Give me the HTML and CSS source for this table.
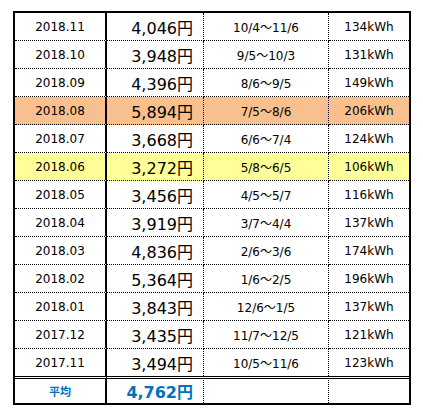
FILE: index.html
```html
<!DOCTYPE html>
<html lang="ja">

<head>
    <meta charset="UTF-8">
    <meta name="viewport" content="width=device-width, initial-scale=1.0">
    <title>電気料金</title>
    <link rel="stylesheet" href="styles.css">
</head>

<body>
    <table class="bill">
        <colgroup>
            <col class="col__month">
            <col class="col__price">
            <col class="col__term">
            <col class="col__kwh">
        </colgroup>
        <tbody>
            <tr><td>2018.11</td><td class="price">4,046円</td><td>10/4～11/6</td><td>134kWh</td></tr>
            <tr><td>2018.10</td><td class="price">3,948円</td><td>9/5～10/3</td><td>131kWh</td></tr>
            <tr><td>2018.09</td><td class="price">4,396円</td><td>8/6～9/5</td><td>149kWh</td></tr>
            <tr class="max"><td>2018.08</td><td class="price">5,894円</td><td>7/5～8/6</td><td>206kWh</td></tr>
            <tr><td>2018.07</td><td class="price">3,668円</td><td>6/6～7/4</td><td>124kWh</td></tr>
            <tr class="min"><td>2018.06</td><td class="price">3,272円</td><td>5/8～6/5</td><td>106kWh</td></tr>
            <tr><td>2018.05</td><td class="price">3,456円</td><td>4/5～5/7</td><td>116kWh</td></tr>
            <tr><td>2018.04</td><td class="price">3,919円</td><td>3/7～4/4</td><td>137kWh</td></tr>
            <tr><td>2018.03</td><td class="price">4,836円</td><td>2/6～3/6</td><td>174kWh</td></tr>
            <tr><td>2018.02</td><td class="price">5,364円</td><td>1/6～2/5</td><td>196kWh</td></tr>
            <tr><td>2018.01</td><td class="price">3,843円</td><td>12/6～1/5</td><td>137kWh</td></tr>
            <tr><td>2017.12</td><td class="price">3,435円</td><td>11/7～12/5</td><td>121kWh</td></tr>
            <tr class="last"><td>2017.11</td><td class="price">3,494円</td><td>10/5～11/6</td><td>123kWh</td></tr>
        </tbody>
        <tfoot>
            <tr class="avg"><td class="avg__label">平均</td><td class="price">4,762円</td><td></td><td></td></tr>
        </tfoot>
    </table>
</body>

</html>
```

FILE: styles.css
```css
body {
    margin: 0;
    background-color: #fff;
    font-family: "DejaVu Sans", "Noto Sans CJK JP", sans-serif;
    color: #000;
}

.bill {
    margin: 11px 0 0 13px;
    width: 398px;
    table-layout: fixed;
    border-collapse: separate;
    border-spacing: 0;
    border: 2px solid #000;
}

.col__month {
    width: 92px;
}

.col__price {
    width: 97px;
}

.col__term {
    width: 125px;
}

.bill td {
    padding: 0;
    height: 27px;
    font-size: 12px;
    text-align: center;
    border-bottom: 1px dotted #000;
    border-right: 1px dotted #000;
}

.bill td:first-child {
    border-right: 2px solid #000;
}

.bill td:last-child {
    border-right: none;
}

.bill .price {
    font-size: 16px;
    text-align: right;
    padding-right: 10px;
}

.max td {
    background-color: #f8c08f;
}

.min td {
    background-color: #ffff99;
}

.last td {
    border-bottom: none;
}

.avg td {
    height: 24px;
    border-top: 3px double #000;
    border-bottom: none;
    color: #0070c0;
    font-weight: bold;
}

.avg .avg__label {
    font-size: 11px;
}
```
